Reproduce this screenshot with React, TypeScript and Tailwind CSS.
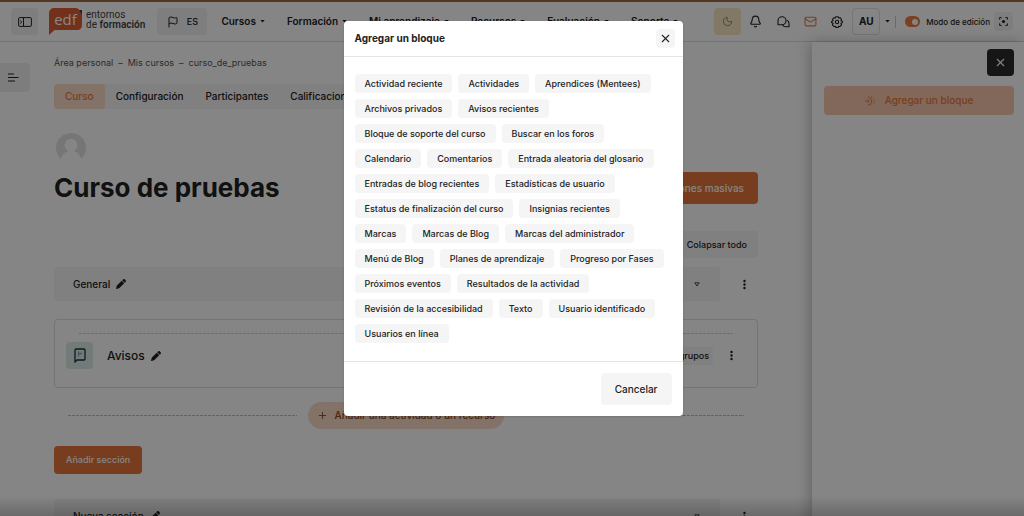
import React from "react";
import { Bell, Flag, Mail, Moon, Plus, X } from "lucide-react";
import { FaEllipsisVertical, FaPen } from "react-icons/fa6";

const navItems = [
  "Cursos",
  "Formación",
  "Mi aprendizaje",
  "Recursos",
  "Evaluación",
  "Soporte",
];

const tabs = ["Curso", "Configuración", "Participantes", "Calificaciones"];

const crumbs = ["Área personal", "Mis cursos", "curso_de_pruebas"];

const blocks = [
  "Actividad reciente",
  "Actividades",
  "Aprendices (Mentees)",
  "Archivos privados",
  "Avisos recientes",
  "Bloque de soporte del curso",
  "Buscar en los foros",
  "Calendario",
  "Comentarios",
  "Entrada aleatoria del glosario",
  "Entradas de blog recientes",
  "Estadísticas de usuario",
  "Estatus de finalización del curso",
  "Insignias recientes",
  "Marcas",
  "Marcas de Blog",
  "Marcas del administrador",
  "Menú de Blog",
  "Planes de aprendizaje",
  "Progreso por Fases",
  "Próximos eventos",
  "Resultados de la actividad",
  "Revisión de la accesibilidad",
  "Texto",
  "Usuario identificado",
  "Usuarios en línea",
];

const Caret = () => (
  <svg width="5" height="3" viewBox="0 0 5 3" fill="currentColor">
    <path d="M.3 0h4.400L2.500 2.500z" />
  </svg>
);

const Logo = () => (
  <a href="#" className="ml-[11px] flex shrink-0 items-center gap-1 text-[#444]">
    <span className="relative block h-[27px] w-[33px]">
      <svg width="33" height="27" viewBox="0 0 33 27">
        <path d="M26 2h7v8z" fill="#3c4452" />
        <path
          d="M5 0h21.500c2 0 3 .8 3.800 2.200L32.500 6c.4.700.5 1.300.5 2v9.500a4.500 4.500 0 0 1-4.500 4.500H5.500L0 27V5a5 5 0 0 1 5-5z"
          fill="#dd5c35"
        />
      </svg>
      <span className="absolute inset-x-0 top-0 text-center font-['Open_Sans',sans-serif] text-[15px] leading-[22px] font-medium text-white">
        edf
      </span>
    </span>
    <span className="pb-1 font-[Roboto,sans-serif] text-[10px] leading-[10px] whitespace-nowrap">
      entornos
      <br />
      de <b className="font-semibold">formación</b>
    </span>
  </a>
);

const Header = () => (
  <header className="flex h-[42px] shrink-0 items-center border-t-2 border-b border-t-[#9c6841] border-b-[#dcdcdc] bg-white px-[11px]">
    <button
      aria-label="Menú"
      className="flex size-[27px] shrink-0 items-center justify-center rounded bg-[#f1f1f1]"
    >
      <svg
        width="14"
        height="10"
        viewBox="0 0 14 10"
        fill="none"
        stroke="currentColor"
      >
        <rect x=".6" y=".6" width="12.8" height="8.8" rx="1.2" />
        <path d="M5.500 1v8M2.200 3.500 3.800 5 2.200 6.500" />
      </svg>
    </button>
    <Logo />
    <button className="ml-3 flex h-[27px] w-[50px] shrink-0 items-center justify-center gap-2 rounded bg-[#f1f1f1] text-[9px] font-medium">
      <Flag size={12} />
      ES
    </button>
    <nav className="ml-[14px] flex gap-[22px] text-[10px] font-semibold whitespace-nowrap">
      {navItems.map((item) => (
        <a key={item} href="#" className="flex items-center gap-1">
          {item}
          <Caret />
        </a>
      ))}
    </nav>
    <div className="ml-auto flex shrink-0 items-center">
      <button
        aria-label="Modo oscuro"
        className="flex size-[27px] items-center justify-center rounded bg-[#f8e6c4] text-[#8a8070]"
      >
        <Moon size={11} />
      </button>
      <div className="ml-px flex">
        <button aria-label="Notificaciones" className="flex w-[27px] justify-center">
          <Bell size={13} />
        </button>
        <button aria-label="Mensajes" className="flex w-[29px] items-center justify-center">
          <svg
            width="13"
            height="12"
            viewBox="0 0 13 12"
            fill="none"
            stroke="currentColor"
            strokeWidth="1.1"
            strokeLinejoin="round"
          >
            <path d="M1 8.500V4.800A4 4 0 1 1 5 8.800H1.200z" />
            <path d="M9.900 4.200a3.400 3.400 0 0 1 2.100 3.100v3.500H8.600A3.400 3.400 0 0 1 5.600 9" />
          </svg>
        </button>
        <button aria-label="Correo" className="flex w-[25px] justify-center text-[#ec7a45]">
          <Mail size={13} />
        </button>
        <button aria-label="Ajustes" className="flex w-[27px] items-center justify-center">
          <svg
            width="12"
            height="12"
            viewBox="0 0 12 12"
            fill="none"
            stroke="currentColor"
            strokeWidth="1.1"
            strokeLinejoin="round"
          >
            <path d="M4.800.7h2.400l.5 1.300 1.400-.3 1.500 1.800-.7 1.300 1.500.8v1l-1.500.9.600 1.300-1.400 1.700-1.500-.2-.5 1.200H4.900l-.6-1.200-1.400.2-1.500-1.700.7-1.300L.6 6.500v-1l1.500-.7-.7-1.300 1.500-1.800 1.400.3z" />
            <circle cx="6" cy="6" r="1.700" />
          </svg>
        </button>
      </div>
      <button className="ml-[2px] flex h-[27px] w-[28px] items-center justify-center rounded border border-[#e2e2e2] text-[10px] font-bold">
        AU
      </button>
      <button aria-label="Usuario" className="flex w-[15px] justify-center">
        <Caret />
      </button>
      <span className="h-3 w-px bg-[#ccc]" />
      <label className="ml-[9px] flex items-center gap-[6px] text-[8px] font-medium">
        <input type="checkbox" defaultChecked className="peer sr-only" />
        <span className="flex h-[11px] w-[15px] items-center justify-end rounded-full bg-[#ec7a45] px-[2px]">
          <span className="size-[6px] rounded-full bg-white" />
        </span>
        Modo de edición
      </label>
      <button
        aria-label="Pantalla completa"
        className="ml-1 flex size-[19px] items-center justify-center rounded bg-[#f1f1f1]"
      >
        <svg width="9" height="9" viewBox="0 0 9 9" fill="none" stroke="currentColor">
          <path d="M.6 2.600v-2h2M6.400.6h2v2M8.400 6.400v2h-2M2.600 8.400h-2v-2" />
          <circle cx="4.500" cy="4.500" r="1.600" fill="currentColor" stroke="none" />
        </svg>
      </button>
    </div>
  </header>
);

const SectionRow = ({ title }: { title: string }) => (
  <div className="flex items-center">
    <div className="flex h-[34px] flex-1 items-center gap-[6px] rounded bg-[#f5f5f5] pr-5 pl-[19px] text-[10px] font-medium">
      {title}
      <FaPen size={10} />
      <svg
        className="ml-auto"
        width="6"
        height="5"
        viewBox="0 0 6 5"
        fill="none"
        stroke="currentColor"
        strokeWidth=".8"
      >
        <path d="M.8.8h4.400L3 4z" />
      </svg>
    </div>
    <button aria-label="Opciones" className="mr-[7px] ml-[19px] w-3">
      <FaEllipsisVertical size={11} />
    </button>
  </div>
);

const Course = () => (
  <main className="min-w-0 flex-1 px-[54px] pt-[14px]">
    <div className="flex h-[14px] items-center gap-[5px] text-[9px] text-[#555]">
      {crumbs.map((crumb, idx) => (
        <React.Fragment key={crumb}>
          {idx > 0 && <span>–</span>}
          <a href="#">{crumb}</a>
        </React.Fragment>
      ))}
    </div>

    <div className="mt-[14px] inline-flex h-[25px] rounded bg-[#f5f5f5] text-[10px] font-medium">
      {tabs.map((tab, idx) => (
        <a
          key={tab}
          href="#"
          className={
            idx === 0
              ? "flex items-center rounded bg-[#fbdac8] px-[11px] text-[#e8773d]"
              : "flex items-center px-[11px]"
          }
        >
          {tab}
        </a>
      ))}
    </div>

    <svg className="mt-[24px] ml-[2px] block" width="30" height="30" viewBox="0 0 30 30">
      <path
        d="M15 0a15 15 0 0 0-10.300 25.900C6 21.500 9 18.500 12.200 18.200a6.500 6.500 0 1 1 5.600 0C21 18.500 24 21.500 25.300 25.900A15 15 0 0 0 15 0z"
        fill="#e2e2e2"
      />
    </svg>

    <div className="mt-[9px] flex h-8 items-center justify-between">
      <h1 className="text-[26px] leading-8 font-bold">Curso de pruebas</h1>
      <button className="h-8 rounded bg-[#e6763c] px-[14px] text-[10px] font-medium text-white">
        Acciones masivas
      </button>
    </div>

    <div className="mt-[27px] flex justify-end">
      <button className="h-[27px] rounded bg-[#f5f5f5] px-[11px] text-[9px] font-medium">
        Colapsar todo
      </button>
    </div>

    <div className="mt-[9px]">
      <SectionRow title="General" />
    </div>

    <div className="mt-[18px] h-[69px] rounded border border-[#dedede] pt-[13px] pr-[19px] pl-[11px]">
      <div className="mr-[5px] ml-[13px] h-px bg-[repeating-linear-gradient(to_right,#cfcfcf_0_3px,transparent_3px_4px)]" />
      <div className="mt-2 flex items-center">
        <span className="flex size-[27px] items-center justify-center rounded bg-[#dcebe6] text-[#12344a]">
          <svg
            width="12"
            height="15"
            viewBox="0 0 12 15"
            fill="none"
            stroke="currentColor"
            strokeWidth="1.3"
          >
            <path d="M1 14V2a1 1 0 0 1 1-1h8a1 1 0 0 1 1 1v9a1 1 0 0 1-1 1H3z" />
            <path d="M4.500 3.500v5M5 5.500h3" stroke="#8b9fb8" />
          </svg>
        </span>
        <h2 className="ml-[14px] text-[12px] font-medium">Avisos</h2>
        <FaPen size={10} className="ml-[6px]" />
        <button className="ml-auto h-[18px] rounded bg-[#f5f5f5] px-1 text-[9px] font-medium">
          Sin grupos
        </button>
        <button aria-label="Opciones" className="ml-[13px] w-3">
          <FaEllipsisVertical size={11} />
        </button>
      </div>
    </div>

    <div className="mt-[14px] flex items-center gap-[11px] px-[14px]">
      <span className="h-px flex-1 bg-[repeating-linear-gradient(to_right,#b8b8b8_0_3px,transparent_3px_4px)]" />
      <button className="flex h-[27px] items-center gap-[7px] rounded-full bg-[#fbdac8] px-[9px] text-[10px] font-medium text-[#8a4826]">
        <Plus size={11} />
        Añadir una actividad o un recurso
      </button>
      <span className="h-px flex-1 bg-[repeating-linear-gradient(to_right,#b8b8b8_0_3px,transparent_3px_4px)]" />
    </div>

    <button className="mt-[17px] mb-[25px] block h-[28px] rounded bg-[#e6763c] px-3 text-[9px] font-medium text-white">
      Añadir sección
    </button>

    <SectionRow title="Nueva sección" />
  </main>
);

const Drawer = () => (
  <aside className="w-[212px] shrink-0 bg-white pt-[7px] pr-[10px] pl-3 shadow-[-2px_0_14px_rgba(0,0,0,0.25)]">
    <button
      aria-label="Cerrar cajón"
      className="ml-auto flex size-[27px] items-center justify-center rounded bg-[#2b2b2b] text-white"
    >
      <X size={13} />
    </button>
    <button className="mt-[10px] flex h-[29px] w-full items-center justify-center gap-[10px] rounded-sm bg-[#f8c8ae] text-[10px] font-medium text-[#e6763c]">
      <svg width="10" height="10" viewBox="0 0 10 10" fill="none" stroke="currentColor" strokeWidth=".9">
        <path d="M0 5h4M2.500 3.300 4.300 5 2.500 6.700M3 .8A4.500 4.500 0 0 1 6.800 5 4.500 4.500 0 0 1 3 9.200" />
        <path d="M6 .8A5 5 0 0 1 9.400 5 5 5 0 0 1 6 9.200" strokeDasharray="1 1" />
      </svg>
      Agregar un bloque
    </button>
  </aside>
);

const BlockDialog = () => (
  <div
    role="dialog"
    aria-modal="true"
    aria-labelledby="dialog-title"
    className="w-[339px] rounded bg-white shadow"
  >
    <div className="flex h-9 items-center justify-between border-b border-[#e4e4e4] pr-[8px] pl-[11px]">
      <h2 id="dialog-title" className="text-[10px] font-bold">
        Agregar un bloque
      </h2>
      <button
        aria-label="Cerrar"
        className="flex size-[19px] items-center justify-center rounded bg-[#f5f5f5]"
      >
        <X size={13} />
      </button>
    </div>
    <div className="flex flex-wrap gap-[6px] px-[11px] pt-[17px] pb-[18px]">
      {blocks.map((block) => (
        <a
          key={block}
          href="#"
          className="h-[19px] rounded bg-[#f5f5f5] px-[10px] text-[9px] leading-[19px] font-medium whitespace-nowrap"
        >
          {block}
        </a>
      ))}
    </div>
    <div className="flex justify-end border-t border-[#e4e4e4] p-[11px]">
      <button className="h-8 rounded bg-[#f5f5f5] px-[14px] text-[10px] font-medium">
        Cancelar
      </button>
    </div>
  </div>
);

const App: React.FC = () => {
  return (
    <div className="relative flex h-screen flex-col overflow-hidden bg-white font-['Inter',sans-serif] text-[#222]">
      <Header />
      <div className="relative flex flex-1">
        <button
          aria-label="Abrir índice del curso"
          className="absolute top-[21px] left-0 flex h-[29px] w-[30px] items-center rounded-r bg-[#f0f0f0] pl-2"
        >
          <svg width="11" height="9" viewBox="0 0 11 9" fill="none" stroke="currentColor">
            <path d="M0 1h6M0 4.500h10.500M0 8h7" />
          </svg>
        </button>
        <Course />
        <Drawer />
      </div>

      {/* Shade along the bottom edge */}
      <div className="absolute inset-x-0 bottom-0 h-5 bg-gradient-to-t from-black/20 to-transparent" />

      {/* Backdrop and dialog */}
      <div className="absolute inset-0 flex items-start justify-center bg-black/48 pt-[21px] pl-[2px]">
        <BlockDialog />
      </div>
    </div>
  );
};

export default App;
